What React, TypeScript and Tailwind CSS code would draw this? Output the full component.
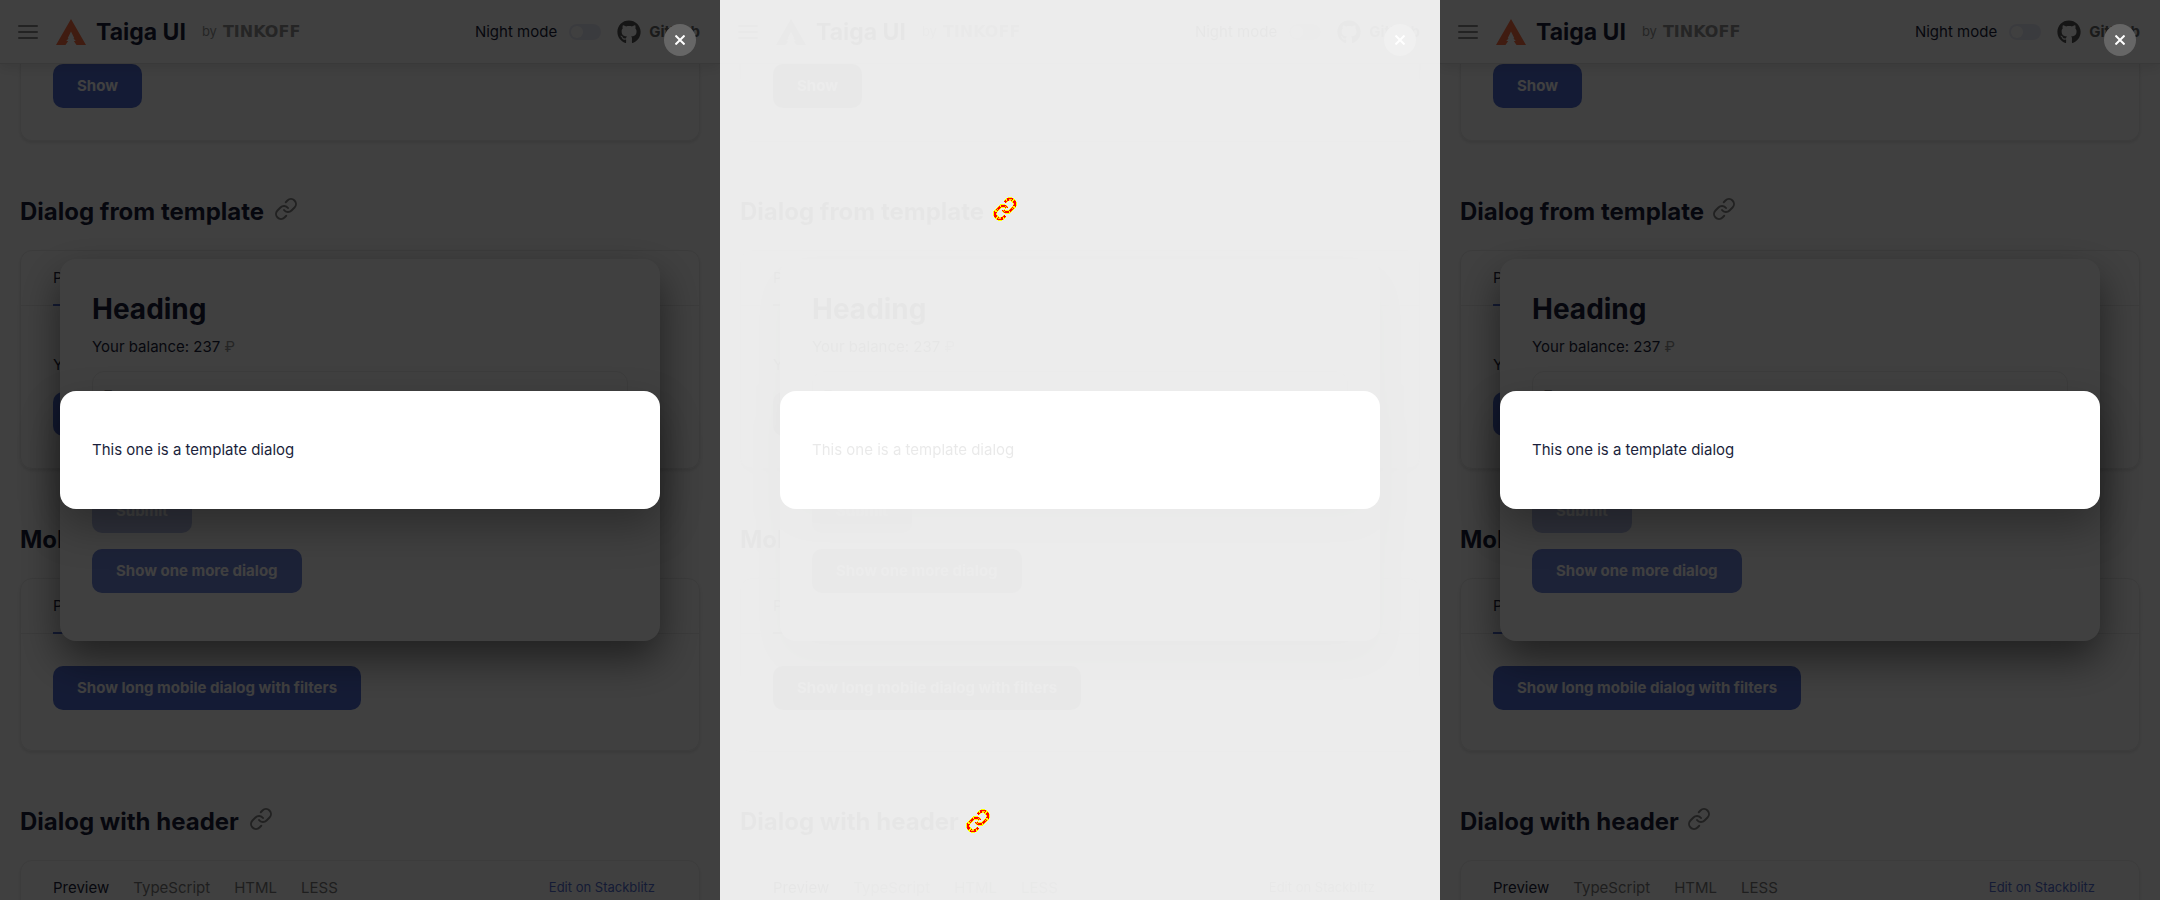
import { FaGithub } from "react-icons/fa";

function cx(...parts: (string | false)[]) {
  return parts.filter(Boolean).join(" ");
}

type Variant = "before" | "diff" | "after";

const link = [
  "M10 13a5 5 0 0 0 7.54.54l3-3a5 5 0 0 0-7.07-7.07l-1.72 1.71",
  "M14 11a5 5 0 0 0-7.54-.54l-3 3a5 5 0 0 0 7.07 7.07l1.71-1.71",
];

function LinkIcon({ diff }: { diff: boolean }) {
  return (
    <svg
      viewBox="0 0 24 24"
      className="size-6"
      fill="none"
      shapeRendering={diff ? "crispEdges" : undefined}
    >
      {diff ? (
        <>
          {link.map((d) => (
            <path key={d} d={d} stroke="#ffff00" strokeWidth="4" />
          ))}
          {link.map((d) => (
            <path key={d} d={d} stroke="#ff0000" strokeWidth="2.4" strokeDasharray="6 1" />
          ))}
          {link.map((d) => (
            <path key={d} d={d} stroke="#ffff00" strokeWidth="0.8" strokeDasharray="3 8" />
          ))}
        </>
      ) : (
        link.map((d) => <path key={d} d={d} stroke="#858585" strokeWidth="2" strokeLinecap="round" />)
      )}
    </svg>
  );
}

function Logo() {
  return (
    <svg viewBox="0 0 30 26" className="h-[26px] w-[30px]" fill="#ff7043">
      <path d="M15 0 L30 26 H20.5 L17.8 22 H19.8 L17.3 19.2 H18.3 L15 12.5 L11.7 19.2 H12.7 L10.2 22 H12.2 L9.5 26 H0 Z" />
    </svg>
  );
}

function Button({ children, className = "bg-[#526ed3]" }: { children: string; className?: string }) {
  return (
    <button
      type="button"
      className={cx("h-11 rounded-[10px] px-6 text-[15px] font-bold text-white", className)}
    >
      {children}
    </button>
  );
}

function Title({ children, variant }: { children: string; variant: Variant }) {
  return (
    <h2 className={cx("flex h-[30px] text-2xl leading-[30px] font-bold", variant === "after" ? "gap-2" : "gap-2.5")}>
      {children}
      <a href="#example" aria-label={children} className={cx("h-6", variant === "diff" && "invisible")}>
        <LinkIcon diff={false} />
      </a>
    </h2>
  );
}

const cardStyle = "rounded-xl border border-[#ededed] shadow-[0_2px_3px_rgba(0,0,0,0.1)]";
const tabStyle = "-mb-px border-b-2 pt-0.5";

function Tabs({ edit = false }: { edit?: boolean }) {
  return (
    <div className="flex h-[55px] gap-6 border-b border-[#ededed] px-8 text-[15px] text-[#7a7a7a]">
      <button type="button" className={cx(tabStyle, "border-[#526ed3] text-[#1b1f3b]")}>
        Preview
      </button>
      <button type="button" className={cx(tabStyle, "border-transparent")}>
        TypeScript
      </button>
      <button type="button" className={cx(tabStyle, "border-transparent")}>
        HTML
      </button>
      <button type="button" className={cx(tabStyle, "border-transparent")}>
        LESS
      </button>
      {edit && (
        <a href="#stackblitz" className="ml-auto self-center pr-3 text-[13px] text-[#526ed3]">
          Edit on Stackblitz
        </a>
      )}
    </div>
  );
}

function Header({ variant }: { variant: Variant }) {
  const id = "night-" + variant;
  return (
    <header className="relative z-10 flex h-16 shrink-0 items-center border-b border-[#e4e4e4] bg-white pt-px pr-5 pl-[18px] shadow-[0_4px_12px_rgba(0,0,0,0.1)]">
      <button type="button" aria-label="Menu" className="flex w-5 flex-col gap-1">
        <span className="h-0.5 rounded-full bg-[#8a8a8a]" />
        <span className="h-0.5 rounded-full bg-[#8a8a8a]" />
        <span className="h-0.5 rounded-full bg-[#8a8a8a]" />
      </button>
      <a href="#home" className="ml-[18px] flex items-center gap-2.5">
        <Logo />
        <span className="text-[23px] font-bold">Taiga UI</span>
      </a>
      <span className="ml-4 flex items-center gap-1.5 text-[13px] text-[#959595]">
        by <b className="font-['DejaVu_Sans',sans-serif] text-base font-bold">TINKOFF</b>
      </span>
      <label htmlFor={id} className="ml-auto text-[15px]">
        Night mode
      </label>
      <span className="relative ml-3 flex h-4 w-8">
        <input
          id={id}
          type="checkbox"
          className="h-4 w-8 appearance-none rounded-full bg-[#e8eaf6]"
        />
        <span className="pointer-events-none absolute top-0.5 left-0.5 size-3 rounded-full bg-white" />
      </span>
      <a href="#github" className="ml-4 flex items-center gap-2 text-[15px] font-bold text-[#6b6b6b]">
        <FaGithub className="size-6 text-[#555]" />
        GitHub
      </a>
    </header>
  );
}

function Page({ variant }: { variant: Variant }) {
  return (
    <div className="isolate flex h-full flex-col overflow-hidden bg-white">
      <Header variant={variant} />
      <main className="flex flex-col px-5">
        <section className={cx(cardStyle, "rounded-t-none border-t-0 px-8 pb-8")}>
          <Button>Show</Button>
        </section>
        <section className="mt-14 flex flex-col gap-[23px]">
          <Title variant={variant}>Dialog from template</Title>
          <div className={cardStyle}>
            <Tabs />
            <div className="flex flex-col items-start gap-4 px-8 pt-12 pb-8">
              <p className="text-[15px] leading-[22px]">Your balance: 237</p>
              <Button>Show</Button>
            </div>
          </div>
        </section>
        <section className="mt-14 flex flex-col gap-[23px]">
          <Title variant={variant}>Mobile dialog</Title>
          <div className={cardStyle}>
            <Tabs />
            <div className="px-8 pt-8 pb-10">
              <Button>Show long mobile dialog with filters</Button>
            </div>
          </div>
        </section>
        <section className="mt-14 flex flex-col gap-[23px]">
          <Title variant={variant}>Dialog with header</Title>
          <div className={cardStyle}>
            <Tabs edit />
          </div>
        </section>
      </main>
    </div>
  );
}

function FormDialog() {
  return (
    <section
      role="dialog"
      aria-label="Heading"
      className="flex w-full flex-col items-start rounded-2xl bg-white px-8 pt-8 pb-12 shadow-[0_18px_40px_rgba(0,0,0,0.5)]"
    >
      <h2 className="text-[28px] leading-9 font-bold">Heading</h2>
      <p className="mt-2 text-[15px] leading-6">
        Your balance: 237 <span className="text-[#959595]">₽</span>
      </p>
      <input
        type="text"
        aria-label="Type a name"
        placeholder="Type a name"
        className="mt-3 h-12 w-full rounded-xl border border-[#ededed] px-[11px] text-[13px] placeholder:text-[#959595]"
      />
      <div className="mt-[70px] flex flex-col items-start gap-4">
        <Button className="bg-[#b7c0e6]">Submit</Button>
        <Button className="bg-[#7086db]">Show one more dialog</Button>
      </div>
    </section>
  );
}

function TemplateDialog() {
  return (
    <section
      role="dialog"
      aria-label="Template dialog"
      className="w-full rounded-2xl bg-white px-8 py-12 text-[15px] leading-[22px] shadow-[0_18px_40px_rgba(0,0,0,0.3)]"
    >
      This one is a template dialog
    </section>
  );
}

function Panel({ variant }: { variant: Variant }) {
  const diff = variant === "diff";
  return (
    <article className="relative h-full overflow-hidden">
      <div className={cx("h-full", diff && "grayscale")}>
        <Page variant={variant} />
        <div className="absolute inset-0 flex items-center px-[60px]">
          <FormDialog />
        </div>
        <div className="absolute inset-0 flex items-center bg-black/75 px-[60px]">
          <TemplateDialog />
        </div>
        <button
          type="button"
          aria-label="Close"
          className="absolute top-6 right-6 flex size-8 items-center justify-center rounded-full bg-[#666]"
        >
          <svg viewBox="0 0 10 10" className="size-2.5" stroke="#fff" strokeWidth="2">
            <path d="M0.5 0.5 9.5 9.5M9.5 0.5 0.5 9.5" />
          </svg>
        </button>
      </div>
      {diff && (
        <div className="pointer-events-none absolute inset-0 bg-white/90">
          <span className="absolute top-[197px] left-[273px]">
            <LinkIcon diff />
          </span>
          <span className="absolute top-[809px] left-[246px]">
            <LinkIcon diff />
          </span>
        </div>
      )}
    </article>
  );
}

export default function App() {
  return (
    <div className="grid h-screen grid-cols-3 overflow-hidden font-[Inter,sans-serif] text-[#1b1f3b]">
      <Panel variant="before" />
      <Panel variant="diff" />
      <Panel variant="after" />
    </div>
  );
}
